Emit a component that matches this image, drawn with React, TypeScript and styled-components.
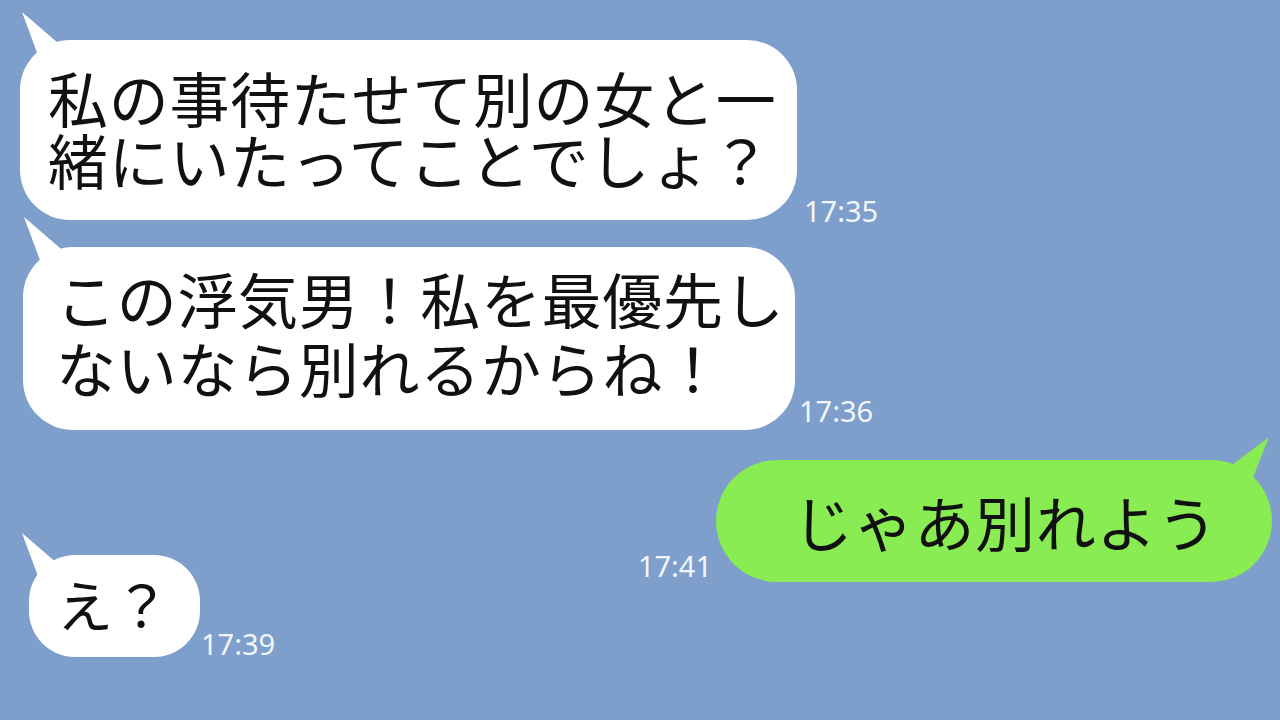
import styled, { createGlobalStyle } from 'styled-components';

const GlobalStyle = createGlobalStyle`
  html, body {
    margin: 0;
    padding: 0;
    background: #7e9ecb;
  }
`;

const Screen = styled.div`
  width: 1280px;
  height: 720px;
  overflow: hidden;
  background: #7e9ecb;
  display: flex;
  flex-direction: column;
`;

const Row = styled.div<{ $top: number; $mine?: boolean; $inset: number; $gap: number }>`
  display: flex;
  flex-direction: ${p => (p.$mine ? 'row-reverse' : 'row')};
  align-items: flex-end;
  margin-top: ${p => p.$top}px;
  ${p => (p.$mine ? `padding-right: ${p.$inset}px;` : `padding-left: ${p.$inset}px;`)}
  gap: ${p => p.$gap}px;
`;

const Bubble = styled.div<{
  $w: number;
  $h: number;
  $r: number;
  $pad: string;
  $lh: number;
  $size: number;
  $mine?: boolean;
  $tail: [number, number];
}>`
  position: relative;
  box-sizing: border-box;
  width: ${p => p.$w}px;
  height: ${p => p.$h}px;
  padding: ${p => p.$pad};
  border-radius: ${p => p.$r}px;
  background: ${p => (p.$mine ? '#88ec52' : '#ffffff')};
  color: #111111;
  font-family: "Noto Sans CJK JP", "Noto Sans", sans-serif;
  font-size: ${p => p.$size}px;
  line-height: ${p => p.$lh}px;
  letter-spacing: 0.7px;
  white-space: nowrap;
  flex-shrink: 0;

  /* speech tail */
  &::before {
    content: '';
    position: absolute;
    width: 50px;
    height: 60px;
    top: ${p => p.$tail[1]}px;
    ${p => (p.$mine ? `right: ${p.$tail[0]}px;` : `left: ${p.$tail[0]}px;`)}
    background: inherit;
    clip-path: ${p =>
      p.$mine
        ? 'polygon(47px 2px, 6px 33px, 28px 50px)'
        : 'polygon(2px 2px, 45px 39px, 22px 56px)'};
  }

  span {
    position: relative;
  }
`;

const Time = styled.div<{ $drop: number }>`
  font-family: "Noto Sans", "Liberation Sans", sans-serif;
  font-size: 29px;
  line-height: 1;
  color: #f2f6fb;
  margin-bottom: ${p => p.$drop}px;
  white-space: nowrap;
`;

export default function App() {
  return (
    <Screen>
      <GlobalStyle />
      <Row $top={40} $inset={20} $gap={7}>
        <Bubble $w={777} $h={180} $r={50} $pad="26px 20px 30px 28px" $lh={62} $size={60} $tail={[0, -30]}>
          <span>私の事待たせて別の女と一<br />緒にいたってことでしょ？</span>
        </Bubble>
        <Time $drop={-5}>17:35</Time>
      </Row>
      <Row $top={27} $inset={23} $gap={4}>
        <Bubble $w={772} $h={183} $r={50} $pad="16px 10px 29px 33px" $lh={69} $size={60} $tail={[-1, -32]}>
          <span>この浮気男！私を最優先し<br />ないなら別れるからね！</span>
        </Bubble>
        <Time $drop={5}>17:36</Time>
      </Row>
      <Row $top={30} $inset={8} $mine $gap={4}>
        <Bubble $mine $w={556} $h={122} $r={61} $pad="3px 40px 3px 77px" $lh={116} $size={60} $tail={[0, -25]}>
          <span>じゃあ別れよう</span>
        </Bubble>
        <Time $drop={2}>17:41</Time>
      </Row>
      <Row $top={-27} $inset={29} $gap={1}>
        <Bubble $w={171} $h={102} $r={46} $pad="0 10px 0 28px" $lh={95} $size={56} $tail={[-9, -24]}>
          <span>え？</span>
        </Bubble>
        <Time $drop={-1}>17:39</Time>
      </Row>
    </Screen>
  );
}
